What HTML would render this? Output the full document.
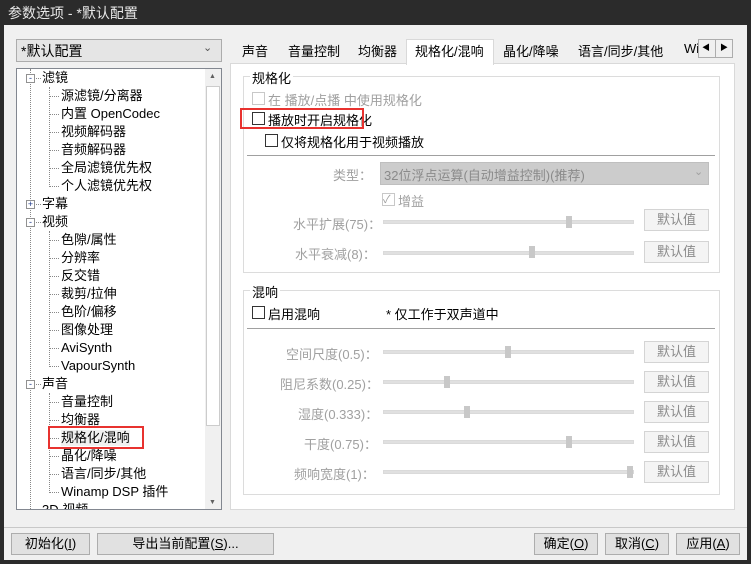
<!DOCTYPE html>
<html><head><meta charset="utf-8"><style>
*{margin:0;padding:0;box-sizing:border-box}
body{width:751px;height:564px;overflow:hidden;background:#2b2b2b;font-family:"Liberation Sans","Noto Sans CJK SC",sans-serif;font-size:13px;color:#000;position:relative}
.a{position:absolute;white-space:nowrap}
#win{position:absolute;left:4px;top:25px;width:743px;height:535px;background:#f0f0f0}
.title{left:8px;top:3px;color:#e8e8e8;font-size:14px}
.btn{position:absolute;background:#e1e1e1;border:1px solid #adadad;text-align:center;line-height:20px;height:22px}
.gbtn{position:absolute;background:#f4f4f4;border:1px solid #d4d4d4;color:#8a8a8a;text-align:center;line-height:20px;height:22px;width:65px}
.dis{color:#a0a0a0}
.track{position:absolute;height:4px;background:#e0e0e0;border:1px solid #dadada}
.thumb{position:absolute;width:6px;height:12px;background:#c8c8c8}
.cb{position:absolute;width:13px;height:13px;border:1px solid #333;background:#fff}
.tr{position:absolute;font-size:13px;line-height:16px}
.d{position:absolute;border-top:1px dotted #888;width:10px}
</style></head><body>
<div class="a title">参数选项 - *默认配置</div>
<div id="win"></div>
<div class="a" style="left:16px;top:39px;width:206px;height:23px;background:#e5e5e5;border:1px solid #acacac"></div>
<div class="a" style="left:21px;top:41px;font-size:14px">*默认配置</div>
<div class="a" style="left:203px;top:41px;color:#555;font-size:11px">&#8964;</div>
<div class="a" style="left:16px;top:68px;width:206px;height:442px;background:#fff;border:1px solid #828790;overflow:hidden">
<div class="a" style="left:188px;top:0;width:16px;height:440px;background:#f0f0f0"></div>
<div class="a" style="left:189px;top:17px;width:14px;height:340px;background:#fff;border:1px solid #ccc"></div>
<div class="a" style="left:192px;top:4px;font-size:7px;color:#606060">▲</div>
<div class="a" style="left:192px;top:430px;font-size:7px;color:#606060">▼</div>
<div class="a" style="left:13px;top:0;height:440px;border-left:1px dotted #888"></div>
<div class="a" style="left:32px;top:18px;height:100px;border-left:1px dotted #888"></div>
<div class="a" style="left:32px;top:162px;height:136px;border-left:1px dotted #888"></div>
<div class="a" style="left:32px;top:324px;height:100px;border-left:1px dotted #888"></div>
</div>
<div class="a" style="left:16px;top:68px;width:188px;height:441px;overflow:hidden">
<div class="d" style="left:20px;top:10px;width:5px"></div>
<div class="d" style="left:20px;top:136px;width:5px"></div>
<div class="d" style="left:20px;top:154px;width:5px"></div>
<div class="d" style="left:20px;top:316px;width:5px"></div>
<div class="d" style="left:33px;top:28px"></div><div class="d" style="left:33px;top:46px"></div><div class="d" style="left:33px;top:64px"></div><div class="d" style="left:33px;top:82px"></div><div class="d" style="left:33px;top:100px"></div><div class="d" style="left:33px;top:118px"></div>
<div class="d" style="left:33px;top:172px"></div><div class="d" style="left:33px;top:190px"></div><div class="d" style="left:33px;top:208px"></div><div class="d" style="left:33px;top:226px"></div><div class="d" style="left:33px;top:244px"></div><div class="d" style="left:33px;top:262px"></div><div class="d" style="left:33px;top:280px"></div><div class="d" style="left:33px;top:298px"></div>
<div class="d" style="left:33px;top:334px"></div><div class="d" style="left:33px;top:352px"></div><div class="d" style="left:33px;top:370px"></div><div class="d" style="left:33px;top:388px"></div><div class="d" style="left:33px;top:406px"></div><div class="d" style="left:33px;top:424px"></div>
<div class="a" style="left:10px;top:6px;width:9px;height:9px;border:1px solid #919191;background:#fff;font-size:9px;line-height:6px;text-align:center;color:#1f3a8a">-</div>
<div class="tr" style="left:26px;top:2px">滤镜</div>
<div class="tr" style="left:45px;top:20px">源滤镜/分离器</div>
<div class="tr" style="left:45px;top:38px">内置 OpenCodec</div>
<div class="tr" style="left:45px;top:56px">视频解码器</div>
<div class="tr" style="left:45px;top:74px">音频解码器</div>
<div class="tr" style="left:45px;top:92px">全局滤镜优先权</div>
<div class="tr" style="left:45px;top:110px">个人滤镜优先权</div>
<div class="a" style="left:10px;top:132px;width:9px;height:9px;border:1px solid #919191;background:#fff;font-size:9px;line-height:7px;text-align:center;color:#1f3a8a">+</div>
<div class="tr" style="left:26px;top:128px">字幕</div>
<div class="a" style="left:10px;top:150px;width:9px;height:9px;border:1px solid #919191;background:#fff;font-size:9px;line-height:6px;text-align:center;color:#1f3a8a">-</div>
<div class="tr" style="left:26px;top:146px">视频</div>
<div class="tr" style="left:45px;top:164px">色隙/属性</div>
<div class="tr" style="left:45px;top:182px">分辨率</div>
<div class="tr" style="left:45px;top:200px">反交错</div>
<div class="tr" style="left:45px;top:218px">裁剪/拉伸</div>
<div class="tr" style="left:45px;top:236px">色阶/偏移</div>
<div class="tr" style="left:45px;top:254px">图像处理</div>
<div class="tr" style="left:45px;top:272px">AviSynth</div>
<div class="tr" style="left:45px;top:290px">VapourSynth</div>
<div class="a" style="left:10px;top:312px;width:9px;height:9px;border:1px solid #919191;background:#fff;font-size:9px;line-height:6px;text-align:center;color:#1f3a8a">-</div>
<div class="tr" style="left:26px;top:308px">声音</div>
<div class="tr" style="left:45px;top:326px">音量控制</div>
<div class="tr" style="left:45px;top:344px">均衡器</div>
<div class="tr" style="left:45px;top:362px;background:#f0f0f0">规格化/混响</div>
<div class="tr" style="left:45px;top:380px">晶化/降噪</div>
<div class="tr" style="left:45px;top:398px">语言/同步/其他</div>
<div class="tr" style="left:45px;top:416px">Winamp DSP 插件</div>
<div class="tr" style="left:26px;top:434px">3D 视频</div>
</div>
<div class="a" style="left:48px;top:426px;width:96px;height:23px;border:2px solid #e8322f"></div>
<div class="a" style="left:230px;top:63px;width:505px;height:447px;background:#fff;border:1px solid #d9d9d9"></div>
<div class="a" style="left:406px;top:39px;width:88px;height:26px;background:#fff;border:1px solid #d9d9d9;border-bottom:none"></div>
<div class="a" style="left:242px;top:41px">声音</div>
<div class="a" style="left:288px;top:41px">音量控制</div>
<div class="a" style="left:358px;top:41px">均衡器</div>
<div class="a" style="left:415px;top:41px">规格化/混响</div>
<div class="a" style="left:503px;top:41px">晶化/降噪</div>
<div class="a" style="left:578px;top:41px">语言/同步/其他</div>
<div class="a" style="left:684px;top:41px">Wi</div>
<div class="a" style="left:698px;top:39px;width:35px;height:19px;background:#f0f0f0;border:1px solid #adadad"></div>
<div class="a" style="left:715px;top:40px;height:17px;border-left:1px solid #adadad"></div>
<div class="a" style="left:702px;top:42px;font-size:8px">◀</div>
<div class="a" style="left:720px;top:42px;font-size:8px">▶</div>
<div class="a" style="left:243px;top:76px;width:477px;height:197px;border:1px solid #dcdcdc"></div>
<div class="a" style="left:250px;top:68px;background:#fff;padding:0 2px">规格化</div>
<div class="cb" style="left:252px;top:92px;border-color:#c8c8c8"></div>
<div class="a dis" style="left:268px;top:90px">在 播放/点播 中使用规格化</div>
<div class="cb" style="left:252px;top:112px"></div>
<div class="a" style="left:268px;top:110px">播放时开启规格化</div>
<div class="a" style="left:240px;top:108px;width:124px;height:21px;border:2px solid #e8322f"></div>
<div class="cb" style="left:265px;top:134px"></div>
<div class="a" style="left:281px;top:132px">仅将规格化用于视频播放</div>
<div class="a" style="left:247px;top:155px;width:468px;border-top:1px solid #a0a0a0"></div>
<div class="a dis" style="left:333px;top:165px">类型：</div>
<div class="a" style="left:380px;top:162px;width:329px;height:23px;background:#cccccc;border:1px solid #bfbfbf"></div>
<div class="a dis" style="left:384px;top:165px;color:#8a8a8a">32位浮点运算(自动增益控制)(推荐)</div>
<div class="a dis" style="left:694px;top:165px;font-size:11px">&#8964;</div>
<div class="cb" style="left:382px;top:193px;border-color:#c8c8c8"></div>
<div class="a dis" style="left:383px;top:191px;font-size:11px">✓</div>
<div class="a dis" style="left:398px;top:191px">增益</div>
<div class="a dis" style="left:293px;top:214px">水平扩展(75)：</div>
<div class="track" style="left:383px;top:220px;width:251px"></div>
<div class="thumb" style="left:566px;top:216px"></div>
<div class="gbtn" style="left:644px;top:209px">默认值</div>
<div class="a dis" style="left:295px;top:244px">水平衰减(8)：</div>
<div class="track" style="left:383px;top:251px;width:251px"></div>
<div class="thumb" style="left:529px;top:246px"></div>
<div class="gbtn" style="left:644px;top:241px">默认值</div>
<div class="a" style="left:243px;top:290px;width:477px;height:205px;border:1px solid #dcdcdc"></div>
<div class="a" style="left:250px;top:282px;background:#fff;padding:0 2px">混响</div>
<div class="cb" style="left:252px;top:306px"></div>
<div class="a" style="left:268px;top:304px">启用混响</div>
<div class="a" style="left:386px;top:304px">* 仅工作于双声道中</div>
<div class="a" style="left:247px;top:328px;width:468px;border-top:1px solid #a0a0a0"></div>
<div class="a dis" style="left:286px;top:344px">空间尺度(0.5)：</div>
<div class="track" style="left:383px;top:350px;width:251px"></div><div class="thumb" style="left:505px;top:346px"></div>
<div class="gbtn" style="left:644px;top:341px">默认值</div>
<div class="a dis" style="left:280px;top:374px">阻尼系数(0.25)：</div>
<div class="track" style="left:383px;top:380px;width:251px"></div><div class="thumb" style="left:444px;top:376px"></div>
<div class="gbtn" style="left:644px;top:371px">默认值</div>
<div class="a dis" style="left:298px;top:404px">湿度(0.333)：</div>
<div class="track" style="left:383px;top:410px;width:251px"></div><div class="thumb" style="left:464px;top:406px"></div>
<div class="gbtn" style="left:644px;top:401px">默认值</div>
<div class="a dis" style="left:304px;top:434px">干度(0.75)：</div>
<div class="track" style="left:383px;top:440px;width:251px"></div><div class="thumb" style="left:566px;top:436px"></div>
<div class="gbtn" style="left:644px;top:431px">默认值</div>
<div class="a dis" style="left:294px;top:464px">频响宽度(1)：</div>
<div class="track" style="left:383px;top:470px;width:251px"></div><div class="thumb" style="left:627px;top:466px"></div>
<div class="gbtn" style="left:644px;top:461px">默认值</div>
<div class="a" style="left:4px;top:527px;width:743px;border-top:1px solid #c8c8c8"></div>
<div class="btn" style="left:11px;top:533px;width:79px">初始化(<u>I</u>)</div>
<div class="btn" style="left:97px;top:533px;width:177px">导出当前配置(<u>S</u>)...</div>
<div class="btn" style="left:534px;top:533px;width:64px">确定(<u>O</u>)</div>
<div class="btn" style="left:605px;top:533px;width:64px">取消(<u>C</u>)</div>
<div class="btn" style="left:676px;top:533px;width:64px">应用(<u>A</u>)</div>
</body></html>
